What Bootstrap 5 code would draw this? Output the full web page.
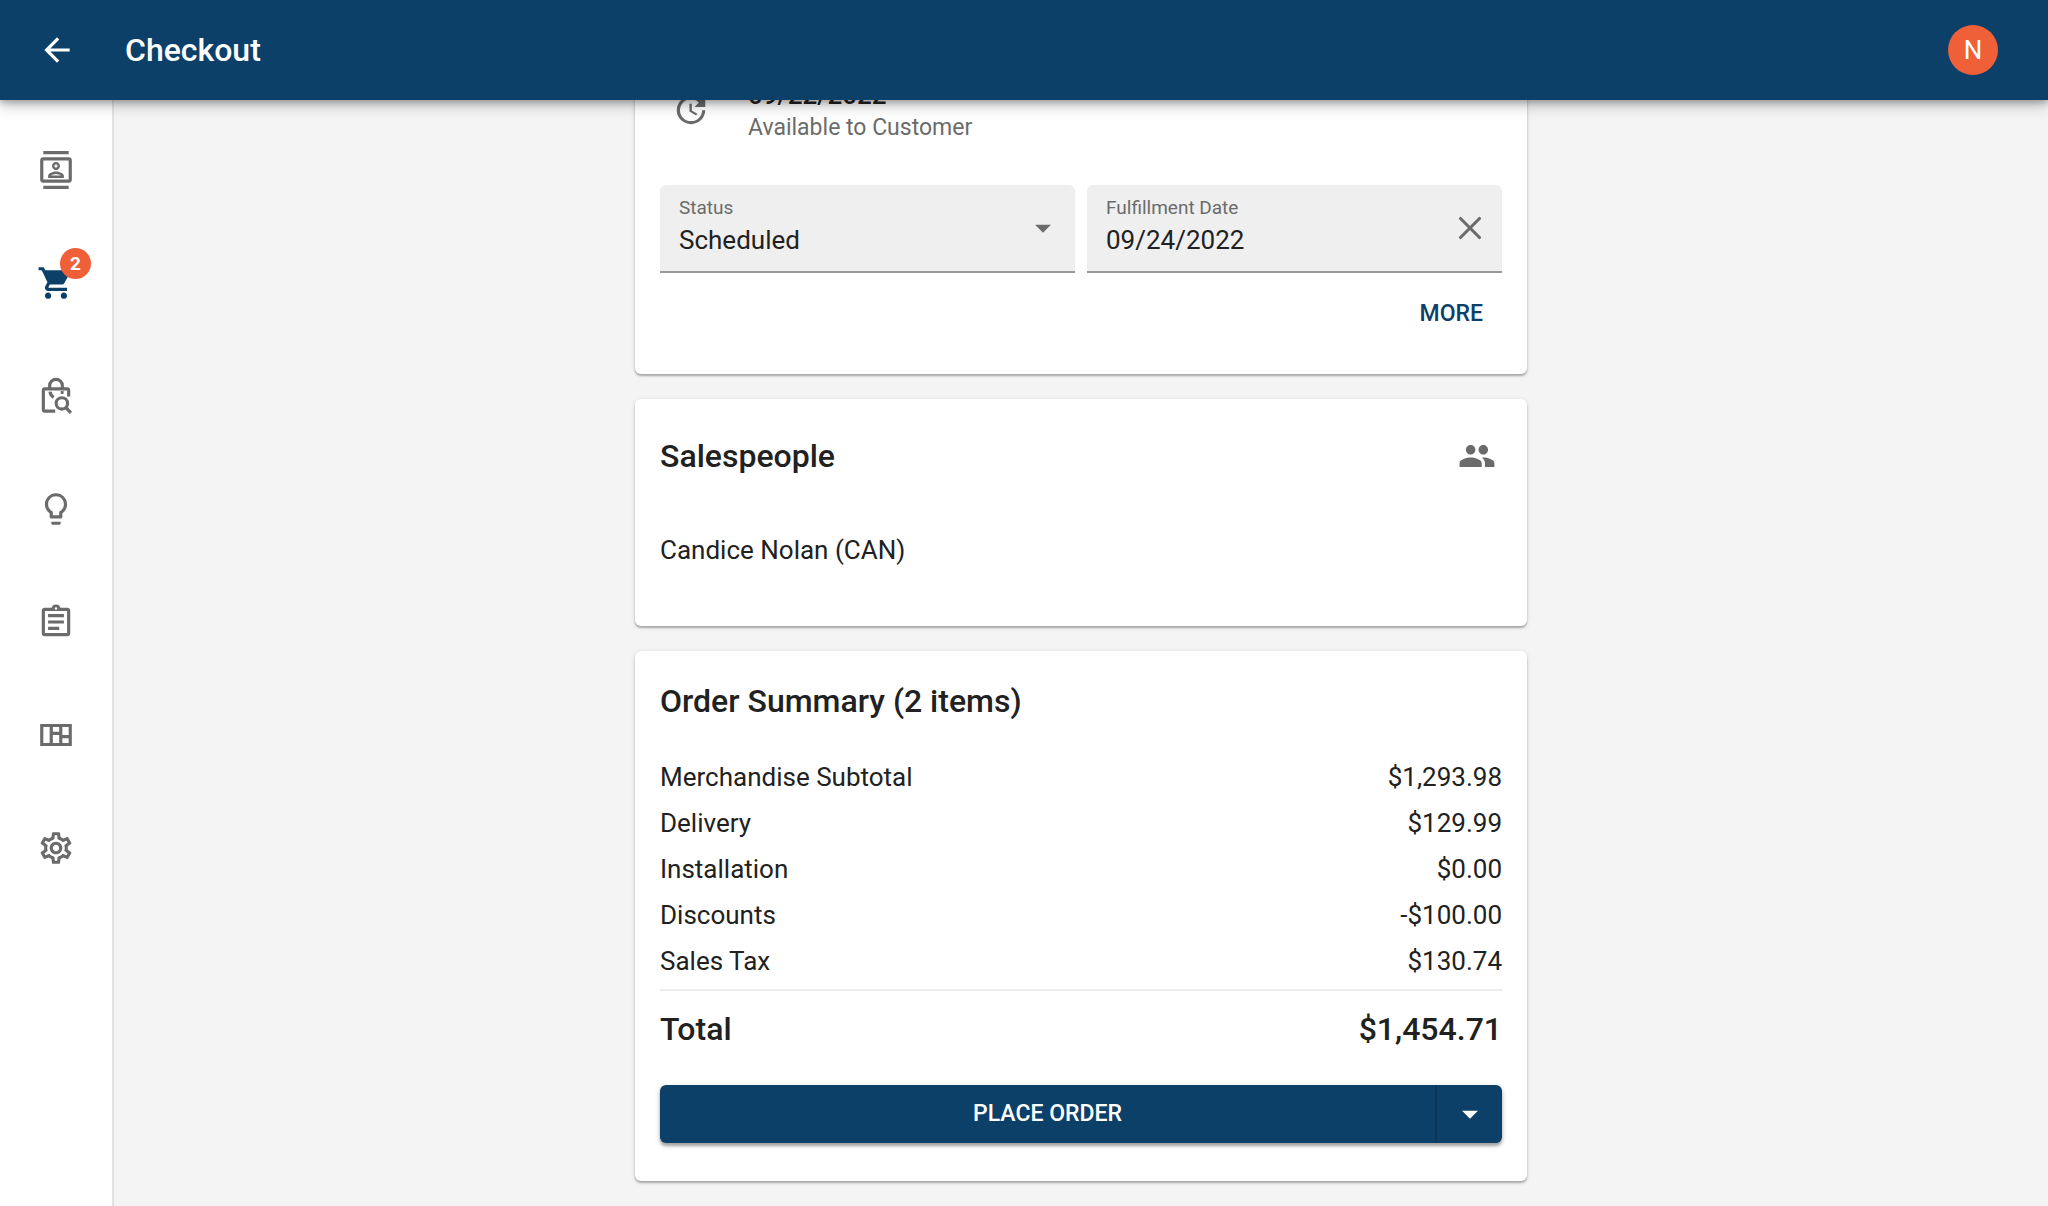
<!DOCTYPE html>
<html lang="en">
<head>
<meta charset="utf-8">
<meta name="viewport" content="width=device-width, initial-scale=1">
<title>Checkout</title>
<link href="https://cdn.jsdelivr.net/npm/bootstrap@5.3.0/dist/css/bootstrap.min.css" rel="stylesheet">
<style>
  :root { --navy: #0c4069; --orange: #f06038; --ink: #212121; --muted: #6b6b6b; }
  body { font-family: Roboto, "Liberation Sans", sans-serif; font-size: 26px; line-height: 32px; color: var(--ink); background: #f4f4f4; }
  .glyph { width: 38px; height: 38px; fill: currentColor; display: block; flex: none; }
  .glyph-line { fill: none; stroke: currentColor; stroke-width: 2; }

  .topbar { height: 100px; padding: 0 50px 0 0; background: var(--navy); color: #fff; box-shadow: 0 3px 6px rgba(0,0,0,.24), 0 6px 14px rgba(0,0,0,.2); }
  .back-link { width: 113px; color: #fff; }
  .page-title { font-size: 32px; line-height: 40px; font-weight: 500; padding-left: 12px; }
  .avatar { width: 50px; height: 50px; font-size: 26px; background: var(--orange); color: #fff; }

  .side-rail { width: 114px; padding-top: 13px; background: #fff; border-right: 2px solid #e2e2e2; }
  .rail-link { height: 113px; color: var(--muted); }
  .rail-link.active { color: var(--navy); }
  .count-badge { top: 22px; left: 60px; width: 31px; height: 31px; font-size: 19px; line-height: 31px; font-weight: 700; background: var(--orange); color: #fff; }

  .column-wrap { max-width: 892px; padding-bottom: 25px; gap: 25px; }
  .panel { background: #fff; border-radius: 6px; padding: 0 25px; box-shadow: 0 2px 2px rgba(0,0,0,.26), 0 1px 5px rgba(0,0,0,.12); }
  .panel-fulfil { margin-top: -40px; padding-top: 17px; padding-bottom: 35px; }
  .panel-sales { padding-top: 37px; padding-bottom: 60px; }
  .panel-order { padding-top: 30px; padding-bottom: 38px; }
  .panel-title { font-size: 32px; line-height: 40px; font-weight: 500; margin: 0; }
  .muted { color: var(--muted); }

  .avail { padding: 0 12px 42px; gap: 38px; }
  .avail-icon { padding-top: 14px; }
  .avail-date { font-weight: 500; line-height: 36px; }
  .avail-note { font-size: 23px; line-height: 30px; color: var(--muted); }
  .field-row { gap: 12px; }
  .field { height: 88px; padding: 0 13px 0 19px; background: #efefef; border-bottom: 2px solid #999; border-radius: 6px 6px 0 0; }
  .field label { font-size: 19px; line-height: 24px; color: var(--muted); }
  .field select, .field input { appearance: none; border: 0; padding: 0; width: 100%; height: 40px; background: transparent; color: var(--ink); outline-offset: 4px; }
  .field:focus-within { border-color: var(--navy); }
  .more-btn { font-size: 23px; line-height: 30px; font-weight: 500; color: var(--navy); padding: 10px 19px; border: 0; }

  .people-btn { margin-right: 6px; }
  .seller { margin-top: 58px; }

  .sum-rows { padding-top: 33px; }
  .sum-row { line-height: 46px; }
  .total-row { font-size: 32px; line-height: 40px; font-weight: 500; border-top: 2px solid #ececec; padding-top: 18px; margin-top: 5px; }
  .order-btn { height: 58px; border-radius: 6px; background: var(--navy); box-shadow: 0 3px 3px rgba(0,0,0,.28), 0 2px 6px rgba(0,0,0,.16); margin-top: 36px; }
  .order-btn button { border: 0; background: transparent; color: #fff; font-size: 23px; font-weight: 500; }
  .order-btn .drop { width: 67px; border-left: 2px solid #0a365a; }
</style>
<script src="https://cdn.jsdelivr.net/npm/bootstrap@5.3.0/dist/js/bootstrap.bundle.min.js"></script>
</head>
<body class="min-vh-100 d-flex flex-column">

<header class="topbar d-flex align-items-center sticky-top">
  <a class="back-link d-flex justify-content-center" href="#" aria-label="Back"><svg class="glyph" viewBox="0 0 24 24"><path d="M20 11H7.83l5.59-5.59L12 4l-8 8 8 8 1.41-1.41L7.83 13H20v-2z"/></svg></a>
  <h1 class="page-title mb-0">Checkout</h1>
  <button class="avatar rounded-circle border-0 p-0 ms-auto" type="button" aria-label="Account N">N</button>
</header>

<div class="d-flex flex-grow-1">
  <nav class="side-rail flex-shrink-0" aria-label="Main">
    <a class="rail-link d-flex align-items-center justify-content-center" href="#" aria-label="Customers"><svg class="glyph" viewBox="0 0 24 24"><path fill-rule="evenodd" d="M4 4h16a2 2 0 0 1 2 2v12a2 2 0 0 1-2 2H4a2 2 0 0 1-2-2V6a2 2 0 0 1 2-2zm0 2v12h16V6zM4 0h16v2H4zM4 22h16v2H4z"/><path d="M12 12c1.380 0 2.500-1.120 2.500-2.500S13.380 7 12 7 9.500 8.120 9.500 9.500 10.620 12 12 12zm0-3.500c.55 0 1 .45 1 1s-.45 1-1 1-1-.45-1-1 .45-1 1-1zm5 7.500c0-2.100-3.310-3-5-3s-5 .9-5 3v1h10v-1zm-8.190-.5c.61-.52 2.030-1 3.190-1 1.170 0 2.590.48 3.200 1H8.810z"/></svg></a>
    <a class="rail-link active d-flex align-items-center justify-content-center position-relative" href="#" aria-label="Cart, 2 items"><svg class="glyph" viewBox="0 0 24 24"><path d="M7 18c-1.100 0-1.990.9-1.990 2S5.900 22 7 22s2-.9 2-2-.9-2-2-2zM1 2v2h2l3.600 7.590-1.350 2.450c-.16.28-.25.61-.25.96 0 1.100.9 2 2 2h12v-2H7.420c-.14 0-.25-.11-.25-.25l.03-.12.9-1.630h7.450c.75 0 1.410-.41 1.750-1.030l3.580-6.490c.08-.14.12-.31.12-.48 0-.55-.45-1-1-1H5.210l-.94-2H1zm16 16c-1.100 0-1.990.9-1.990 2s.89 2 1.990 2 2-.9 2-2-.9-2-2-2z"/></svg><span class="count-badge position-absolute rounded-circle text-center">2</span></a>
    <a class="rail-link d-flex align-items-center justify-content-center" href="#" aria-label="Find orders"><svg class="glyph glyph-line" viewBox="0 0 24 24"><path d="M11.500 21.500H5a1 1 0 0 1-1-1V8.500a1 1 0 0 1 1-1h14a1 1 0 0 1 1 1V12.300M8 7V5.500a4 4 0 0 1 8 0V7"/><path d="M8.200 9.300q.2 2.300 2.300 3.500M15 9.800h1.800"/><circle cx="15.700" cy="16.700" r="3.600"/><path d="M18.300 19.300l3.100 3.400"/></svg></a>
    <a class="rail-link d-flex align-items-center justify-content-center" href="#" aria-label="Ideas"><svg class="glyph" viewBox="0 0 24 24"><path d="M9 21c0 .55.45 1 1 1h4c.55 0 1-.45 1-1v-1H9v1zm3-19C8.140 2 5 5.140 5 9c0 2.380 1.190 4.470 3 5.740V17c0 .55.45 1 1 1h6c.55 0 1-.45 1-1v-2.260c1.810-1.270 3-3.360 3-5.740 0-3.860-3.140-7-7-7zm2.850 11.100l-.85.6V16h-4v-2.300l-.85-.6C7.800 12.160 7 10.630 7 9c0-2.760 2.240-5 5-5s5 2.240 5 5c0 1.630-.8 3.160-2.150 4.100z"/></svg></a>
    <a class="rail-link d-flex align-items-center justify-content-center" href="#" aria-label="Tasks"><svg class="glyph" viewBox="0 0 24 24"><path fill-rule="evenodd" d="M7 15h7v2H7zM7 11h10v2H7zM7 7h10v2H7zM5 3h4.180a3 3 0 0 1 5.640 0H19a2 2 0 0 1 2 2v14a2 2 0 0 1-2 2H5a2 2 0 0 1-2-2V5a2 2 0 0 1 2-2zm0 2v14h14V5zM12 2.750a.75.75 0 0 0 0 1.500.75.75 0 0 0 0-1.500z"/></svg></a>
    <a class="rail-link d-flex align-items-center justify-content-center" href="#" aria-label="Layouts"><svg class="glyph" viewBox="0 0 24 24"><path fill-rule="evenodd" d="M2 5h20v14H2zM4 7v10h4V7zM10 7v3h4V7zM10 12v5h4v-5zM16 7v5h4V7zM16 14v3h4v-3z"/></svg></a>
    <a class="rail-link d-flex align-items-center justify-content-center" href="#" aria-label="Settings"><svg class="glyph" viewBox="0 0 24 24"><path d="M19.430 12.980c.04-.32.07-.64.07-.98 0-.34-.03-.66-.07-.98l2.110-1.650c.19-.15.24-.42.12-.64l-2-3.460c-.09-.16-.26-.25-.44-.25-.06 0-.12.01-.17.03l-2.490 1c-.52-.4-1.080-.73-1.690-.98l-.38-2.650C14.460 2.180 14.250 2 14 2h-4c-.25 0-.46.18-.49.42l-.38 2.650c-.61.25-1.170.59-1.690.98l-2.490-1c-.06-.02-.12-.03-.18-.03-.17 0-.34.09-.43.25l-2 3.460c-.13.22-.07.49.12.64l2.110 1.650c-.04.32-.07.65-.07.98 0 .33.03.66.07.98l-2.110 1.650c-.19.15-.24.42-.12.64l2 3.460c.09.16.26.25.44.25.06 0 .12-.01.17-.03l2.490-1c.52.4 1.080.73 1.690.98l.38 2.650c.03.24.24.42.49.42h4c.25 0 .46-.18.49-.42l.38-2.650c.61-.25 1.170-.59 1.690-.98l2.490 1c.06.02.12.03.18.03.17 0 .34-.09.43-.25l2-3.460c.12-.22.07-.49-.12-.64l-2.110-1.650zm-1.980-1.710c.04.31.05.52.05.73 0 .21-.02.43-.05.73l-.14 1.130.89.7 1.080.84-.7 1.210-1.270-.51-1.040-.42-.9.68c-.43.32-.84.56-1.250.73l-1.060.43-.16 1.130-.2 1.350h-1.400l-.19-1.350-.16-1.130-1.060-.43c-.43-.18-.83-.41-1.230-.71l-.91-.7-1.060.43-1.270.51-.7-1.210 1.080-.84.89-.7-.14-1.130c-.03-.31-.05-.54-.05-.74s.02-.43.05-.73l.14-1.130-.89-.7-1.080-.84.7-1.210 1.270.51 1.040.42.9-.68c.43-.32.84-.56 1.250-.73l1.060-.43.16-1.130.2-1.350h1.390l.19 1.350.16 1.130 1.060.43c.43.18.83.41 1.230.71l.91.7 1.060-.43 1.270-.51.7 1.210-1.070.85-.89.7.14 1.130zM12 8c-2.210 0-4 1.790-4 4s1.790 4 4 4 4-1.790 4-4-1.790-4-4-4zm0 6c-1.100 0-2-.9-2-2s.9-2 2-2 2 .9 2 2-.9 2-2 2z"/></svg></a>
  </nav>

  <main class="flex-grow-1">
    <div class="column-wrap w-100 mx-auto d-flex flex-column">

      <section class="panel panel-fulfil" aria-label="Fulfillment">
        <div class="avail d-flex align-items-start">
          <div class="avail-icon muted"><svg class="glyph" viewBox="0 0 24 24"><path d="M21 10.120h-6.780l2.740-2.820c-2.730-2.700-7.150-2.800-9.880-.1-2.730 2.710-2.730 7.080 0 9.790s7.150 2.710 9.880 0C18.320 15.650 19 14.080 19 12.100h2c0 1.980-.88 4.550-2.640 6.290-3.510 3.480-9.210 3.480-12.720 0-3.500-3.470-3.530-9.110-.02-12.580s9.140-3.470 12.650 0L21 3v7.120zM12.500 8v4.250l3.500 2.080-.72 1.210L11 13V8h1.500z"/></svg></div>
          <div>
            <div class="avail-date">09/22/2022</div>
            <div class="avail-note">Available to Customer</div>
          </div>
        </div>
        <div class="field-row d-flex">
          <div class="col field d-flex align-items-center">
            <div class="flex-grow-1">
              <label class="d-block" for="status">Status</label>
              <select id="status"><option selected>Scheduled</option><option>Unscheduled</option></select>
            </div>
            <svg class="glyph muted pe-none me-n1" viewBox="0 0 24 24"><path d="M7 10l5 5 5-5z"/></svg>
          </div>
          <div class="col field d-flex align-items-center">
            <div class="flex-grow-1">
              <label class="d-block" for="fulfil-date">Fulfillment Date</label>
              <input id="fulfil-date" type="text" value="09/24/2022">
            </div>
            <button class="btn p-0 border-0" type="button" aria-label="Clear date"><svg class="glyph glyph-line muted" viewBox="0 0 24 24"><path d="M6 6l12 12M18 6L6 18" stroke-linecap="round"/></svg></button>
          </div>
        </div>
        <div class="d-flex justify-content-end mt-3"><button class="btn more-btn" type="button">MORE</button></div>
      </section>

      <section class="panel panel-sales">
        <div class="d-flex align-items-center justify-content-between">
          <h2 class="panel-title">Salespeople</h2>
          <button class="btn people-btn p-0 border-0" type="button" aria-label="Edit salespeople"><svg class="glyph muted" viewBox="0 0 24 24"><path d="M16 11c1.660 0 2.990-1.340 2.990-3S17.660 5 16 5c-1.660 0-3 1.340-3 3s1.340 3 3 3zm-8 0c1.660 0 2.990-1.340 2.990-3S9.660 5 8 5C6.340 5 5 6.340 5 8s1.340 3 3 3zm0 2c-2.330 0-7 1.170-7 3.500V19h14v-2.500c0-2.330-4.670-3.500-7-3.500zm8 0c-.29 0-.62.02-.97.05 1.160.84 1.970 1.970 1.970 3.450V19h6v-2.500c0-2.330-4.670-3.500-7-3.500z"/></svg></button>
        </div>
        <p class="seller mb-0">Candice Nolan (CAN)</p>
      </section>

      <section class="panel panel-order">
        <h2 class="panel-title">Order Summary (2 items)</h2>
        <div class="sum-rows">
          <div class="sum-row d-flex justify-content-between"><span>Merchandise Subtotal</span><span>$1,293.98</span></div>
          <div class="sum-row d-flex justify-content-between"><span>Delivery</span><span>$129.99</span></div>
          <div class="sum-row d-flex justify-content-between"><span>Installation</span><span>$0.00</span></div>
          <div class="sum-row d-flex justify-content-between"><span>Discounts</span><span>-$100.00</span></div>
          <div class="sum-row d-flex justify-content-between"><span>Sales Tax</span><span>$130.74</span></div>
        </div>
        <div class="total-row d-flex justify-content-between"><span>Total</span><span>$1,454.71</span></div>
        <div class="order-btn d-flex">
          <button class="flex-grow-1" type="button">PLACE ORDER</button>
          <button class="drop d-flex align-items-center justify-content-center p-0" type="button" aria-label="More order options"><svg class="glyph" viewBox="0 0 24 24"><path d="M7 10l5 5 5-5z"/></svg></button>
        </div>
      </section>

    </div>
  </main>
</div>
</body>
</html>
